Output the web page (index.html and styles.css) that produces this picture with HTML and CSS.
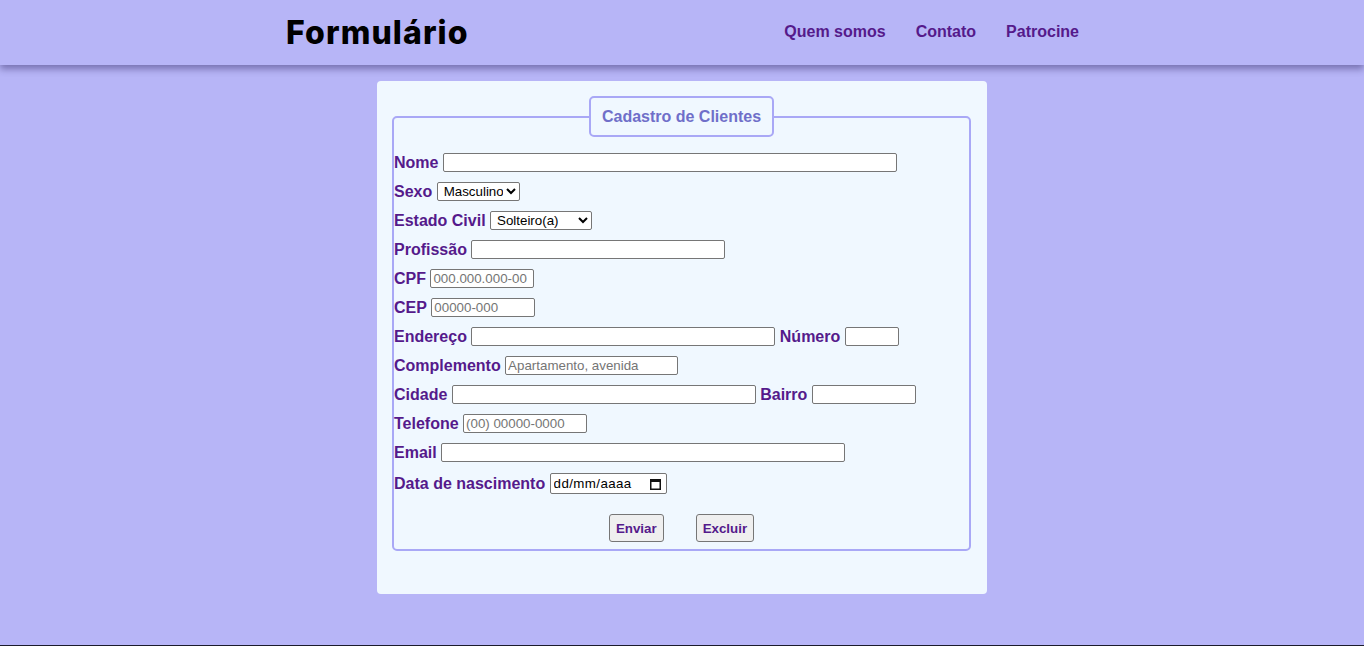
FILE: index.html
```html
<!DOCTYPE html>
<html lang="pt-BR">
<head>
<meta charset="utf-8">
<title>Formulário</title>
<link rel="stylesheet" href="styles.css">
</head>
<body>
<header class="topbar">
  <div class="topbar-inner">
    <h1 class="brand">Formulário</h1>
    <nav class="nav">
      <a href="#" class="nav-link">Quem somos</a>
      <a href="#" class="nav-link">Contato</a>
      <a href="#" class="nav-link">Patrocine</a>
    </nav>
  </div>
</header>
<main class="main">
  <form class="card">
    <fieldset class="fs">
      <legend class="legend">Cadastro de Clientes</legend>
      <div class="row"><label class="lbl">Nome</label><input class="inp w450" type="text"></div>
      <div class="row"><label class="lbl">Sexo</label>
        <select class="sel sel-sexo"><option>Masculino</option><option>Feminino</option></select></div>
      <div class="row"><label class="lbl">Estado Civil</label>
        <select class="sel sel-civil"><option>Solteiro(a)</option><option>Casado(a)</option></select></div>
      <div class="row"><label class="lbl">Profissão</label><input class="inp w250" type="text"></div>
      <div class="row"><label class="lbl">CPF</label><input class="inp w100" type="text" placeholder="000.000.000-00"></div>
      <div class="row"><label class="lbl">CEP</label><input class="inp w100" type="text" placeholder="00000-000"></div>
      <div class="row"><label class="lbl">Endereço</label><input class="inp w300" type="text"><label class="lbl">Número</label><input class="inp w50" type="text"></div>
      <div class="row"><label class="lbl">Complemento</label><input class="inp wdef" type="text" placeholder="Apartamento, avenida"></div>
      <div class="row"><label class="lbl">Cidade</label><input class="inp w300" type="text"><label class="lbl">Bairro</label><input class="inp w100" type="text"></div>
      <div class="row"><label class="lbl">Telefone</label><input class="inp w120" type="text" placeholder="(00) 00000-0000"></div>
      <div class="row"><label class="lbl">Email</label><input class="inp w400" type="text"></div>
      <div class="row row-date"><label class="lbl">Data de nascimento</label>
        <span class="date-box"><input class="date-text" type="text" placeholder="dd/mm/aaaa"><svg class="cal" width="11" height="12" viewBox="0 0 11 12"><rect x="0.75" y="1.75" width="9.5" height="9.5" fill="none" stroke="#111" stroke-width="1.5"/><rect x="0.75" y="1.5" width="9.5" height="2.5" fill="#111"/></svg></span></div>
      <div class="actions">
        <button type="submit" class="btn">Enviar</button>
        <button type="reset" class="btn">Excluir</button>
      </div>
    </fieldset>
  </form>
</main>
<footer class="bottom-line"></footer>
</body>
</html>
```
FILE: styles.css
```css
* { box-sizing: border-box; }
html, body { margin: 0; padding: 0; }
body {
  background: #b7b5f7;
  font-family: "Liberation Sans", Arial, sans-serif;
  min-height: 100vh;
  display: flex;
  flex-direction: column;
}
.topbar {
  height: 65px;
  background: #b7b5f7;
  box-shadow: 0 4px 7px rgba(40, 30, 90, 0.45);
  position: relative;
  z-index: 1;
}
.topbar-inner {
  width: 794px;
  margin: 0 auto;
  height: 100%;
  display: flex;
  align-items: center;
  justify-content: space-between;
  padding-left: 1px;
}
.brand {
  margin: 0;
  font-family: "Inter", "DejaVu Sans", sans-serif;
  font-weight: 800;
  font-size: 32px;
  letter-spacing: 1.1px;
  color: #000;
  line-height: 1;
  padding-top: 1px;
}
.nav {
  display: flex;
  gap: 30px;
  padding-bottom: 2px;
}
.nav-link {
  color: #551a8b;
  text-decoration: none;
  font-weight: bold;
  font-size: 16px;
}
.main {
  flex: 1;
  display: flex;
  justify-content: center;
  align-items: flex-start;
  padding-top: 16px;
  padding-bottom: 40px;
}
.card {
  width: 610px;
  background: #f0f8ff;
  border-radius: 4px;
  padding: 15px 16px 43px 15px;
}
.fs {
  margin: 0;
  border: 2px solid #a9a8f6;
  border-radius: 5px;
  padding: 16px 0 7px 0;
  display: flex;
  flex-direction: column;
  gap: 10px;
}
.legend {
  margin: 0 auto;
  border: 2px solid #a9a8f6;
  border-radius: 5px;
  padding: 10px 11px 9px;
  font-weight: bold;
  font-size: 16px;
  line-height: 18px;
  color: #6f6fc9;
}
.row {
  display: flex;
  align-items: center;
  gap: 4.45px;
  height: 19px;
}
.row-date { height: 21px; margin-top: 1px; }
.lbl {
  font-weight: bold;
  font-size: 16px;
  color: #551a8b;
  line-height: 18px;
}
.inp {
  height: 19px;
  border: 1px solid #767676;
  border-radius: 2px;
  padding: 1px 2px;
  font-family: "Liberation Sans", Arial, sans-serif;
  font-size: 13.33px;
  background: #fff;
  color: #000;
  outline: none;
}
.inp::placeholder { color: #757575; }
.w450 { width: 454px; }
.w400 { width: 404px; }
.w300 { width: 304px; }
.w250 { width: 254px; }
.w120 { width: 124px; }
.w100 { width: 104px; }
.w50 { width: 54px; }
.wdef { width: 173px; }
.sel {
  height: 19px;
  border: 1px solid #767676;
  border-radius: 2px;
  font-family: "Liberation Sans", Arial, sans-serif;
  font-size: 13.33px;
  background: #fff;
  color: #000;
  padding: 0 0 0 2px;
}
.sel-sexo { width: 83px; }
.sel-civil { width: 102px; }
.date-box {
  display: inline-flex;
  align-items: center;
  width: 117px;
  height: 21px;
  border: 1px solid #767676;
  border-radius: 2px;
  background: #fff;
  padding: 0 5px 0 3px;
}
.date-text {
  border: 0;
  outline: none;
  padding: 0;
  width: 90px;
  font-family: "Liberation Sans", Arial, sans-serif;
  font-size: 13.33px;
  letter-spacing: 0.4px;
  background: transparent;
}
.date-text::placeholder { color: #000; }
.cal { margin-left: auto; }
.actions {
  display: flex;
  justify-content: center;
  gap: 32px;
  margin-top: 10px;
}
.btn {
  height: 28px;
  padding: 0 6px;
  border: 1px solid #767676;
  border-radius: 3px;
  background: #efefef;
  color: #551a8b;
  font-family: "Liberation Sans", Arial, sans-serif;
  font-weight: bold;
  font-size: 13.33px;
}
.bottom-line {
  height: 1px;
  background: #1b1b2b;
}
```
